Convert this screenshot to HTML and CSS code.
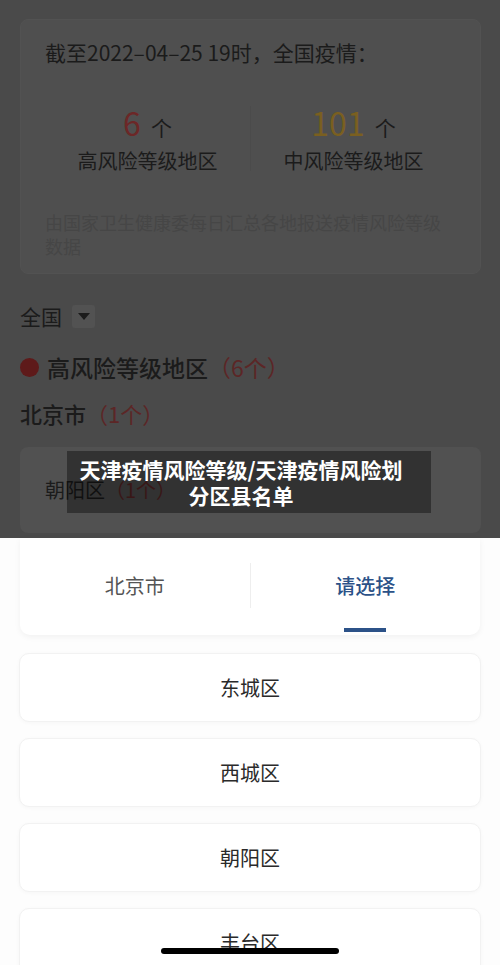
FILE: index.html
```html
<!doctype html>
<html lang="zh-CN">

<head>
  <meta charset="UTF-8" />
  <meta name="viewport" content="width=device-width, initial-scale=1.0" />
  <title>天津疫情风险等级</title>
  <link rel="stylesheet" href="styles.css">
</head>

<body>
  <!-- Dimmed page behind the picker -->
  <main class="page">
    <section class="summary">
      <p class="summary-title">截至2022–04–25 19时，全国疫情：</p>
      <div class="stats">
        <div class="stat">
          <div class="stat-value"><span class="num num-high">6</span><span class="unit">个</span></div>
          <div class="stat-label">高风险等级地区</div>
        </div>
        <div class="stat-divider"></div>
        <div class="stat">
          <div class="stat-value"><span class="num num-mid">101</span><span class="unit">个</span></div>
          <div class="stat-label">中风险等级地区</div>
        </div>
      </div>
      <p class="summary-note">由国家卫生健康委每日汇总各地报送疫情风险等级数据</p>
    </section>

    <div class="region-select">
      <span>全国</span>
      <span class="caret-box"><span class="caret"></span></span>
    </div>

    <h2 class="level-title"><span class="dot"></span>高风险等级地区<span class="count">（6个）</span></h2>
    <h3 class="city-title">北京市<span class="count">（1个）</span></h3>

    <div class="district-card">
      <div class="district-row">朝阳区<span class="count">（1个）</span></div>
    </div>
  </main>

  <div class="caption">天津疫情风险等级/天津疫情风险划分区县名单</div>

  <!-- Area picker sheet -->
  <div class="sheet">
    <div class="tabs">
      <div class="tab">北京市</div>
      <div class="tab-divider"></div>
      <div class="tab tab-active">请选择</div>
    </div>
    <ul class="district-list">
      <li class="district-item">东城区</li>
      <li class="district-item">西城区</li>
      <li class="district-item">朝阳区</li>
      <li class="district-item">丰台区</li>
    </ul>
  </div>

  <div class="home-indicator"></div>
</body>

</html>
```

FILE: styles.css
```css
html,
body {
  margin: 0;
  padding: 0;
  width: 500px;
  height: 965px;
  overflow: hidden;
  background-color: #4a4a4a;
  font-family: "Noto Sans CJK SC", "Noto Sans", sans-serif;
  color: #1b1b1b;
}

.page {
  padding: 19px 19px 0 20px;
}

/* Summary card */
.summary {
  background-color: #4f4f4f;
  border: 1px solid #525252;
  border-radius: 8px;
  padding: 18px 24px 15px;
}

.summary-title {
  margin: 0;
  font-size: 21px;
  line-height: 28px;
}

.stats {
  display: flex;
  align-items: center;
  margin-top: 36px;
}

.stat {
  flex: 1;
  text-align: center;
}

.stat-value {
  font-size: 32px;
  line-height: 40px;
}

.num-high {
  color: #6c2727;
}

.num-mid {
  color: #7a5f20;
}

.unit {
  font-size: 21px;
  margin-left: 10px;
}

.stat-label {
  font-size: 20px;
  line-height: 28px;
}

.stat-divider {
  width: 1px;
  height: 65px;
  background-color: #4b4b4b;
}

.summary-note {
  margin: 35px 0 0;
  font-size: 18px;
  line-height: 24px;
  color: #464646;
}

/* Filters and list */
.region-select {
  display: flex;
  align-items: center;
  margin-top: 27px;
  font-size: 21px;
  line-height: 30px;
}

.caret-box {
  display: flex;
  align-items: center;
  justify-content: center;
  width: 23px;
  height: 23px;
  margin-left: 10px;
  border-radius: 3px;
  background-color: #525252;
}

.caret {
  width: 0;
  height: 0;
  border-left: 6px solid transparent;
  border-right: 6px solid transparent;
  border-top: 7px solid #1b1b1b;
}

.level-title {
  display: flex;
  align-items: center;
  margin: 20px 0 0;
  font-size: 23px;
  line-height: 32px;
  font-weight: 500;
}

.dot {
  width: 19px;
  height: 19px;
  margin-right: 8px;
  border-radius: 50%;
  background-color: #5e1a1a;
}

.count {
  color: #5c2626;
  font-weight: 400;
}

.city-title {
  margin: 14px 0 0;
  font-size: 22px;
  line-height: 32px;
  font-weight: 500;
}

.district-card {
  margin-top: 18px;
  padding: 29px 25px;
  border-radius: 8px;
  background-color: #515151;
}

.district-row {
  font-size: 20px;
  line-height: 28px;
}

/* Watermark caption, see-through so the row below still shows */
.caption {
  position: absolute;
  top: 451px;
  left: 67px;
  width: 364px;
  box-sizing: border-box;
  padding: 5px 26px 5px 10px;
  background-color: rgba(0, 0, 0, 0.38);
  color: #ffffff;
  font-size: 21px;
  line-height: 26px;
  font-weight: 700;
  text-align: center;
}

/* Bottom sheet */
.sheet {
  position: fixed;
  left: 0;
  right: 0;
  bottom: 0;
  height: 427px;
  background-color: #fdfdfd;
}

.tabs {
  display: flex;
  align-items: center;
  height: 94px;
  padding-bottom: 3px;
  margin: 0 20px;
  background-color: #ffffff;
  border-radius: 0 0 10px 10px;
  box-shadow: 0 2px 6px rgba(0, 0, 0, 0.05);
}

.tab {
  position: relative;
  flex: 1;
  align-self: stretch;
  display: flex;
  align-items: center;
  justify-content: center;
  font-size: 20px;
  color: #555555;
}

.tab-active {
  color: #2c5288;
  font-weight: 500;
}

.tab-active::after {
  content: "";
  position: absolute;
  bottom: 0;
  left: 50%;
  width: 42px;
  height: 4px;
  margin-left: -21px;
  background-color: #2c5288;
}

.tab-divider {
  width: 1px;
  height: 45px;
  background-color: #eeeeee;
}

.district-list {
  display: flex;
  flex-direction: column;
  gap: 16px;
  margin: 0;
  padding: 18px 19px 0;
  list-style: none;
}

.district-item {
  display: flex;
  align-items: center;
  justify-content: center;
  height: 67px;
  border: 1px solid #f2f2f2;
  border-radius: 10px;
  background-color: #ffffff;
  box-shadow: 0 1px 4px rgba(0, 0, 0, 0.03);
  font-size: 20px;
  color: #2a2a2a;
}

.home-indicator {
  position: fixed;
  left: 50%;
  bottom: 11px;
  width: 178px;
  height: 6px;
  margin-left: -89px;
  border-radius: 3px;
  background-color: #000000;
}
```
